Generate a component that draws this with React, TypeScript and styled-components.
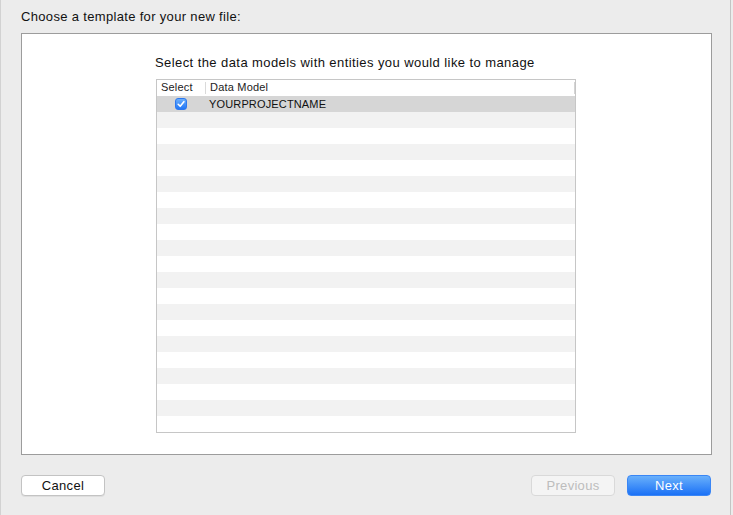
import styled, { createGlobalStyle } from "styled-components";

const GlobalStyle = createGlobalStyle`
    html, body {
        margin: 0;
        padding: 0;
        background: #ececec;
    }
    body {
        font-family: "Liberation Sans", Arial, sans-serif;
        color: #1a1a1a;
    }
`;

const StyledWindow = styled.div`
    width: 731px;
    height: 515px;
    box-sizing: border-box;
    border-left: 1px solid #d2d2d2;
    border-right: 1px solid #c4c4c4;
    padding: 0 19px 0 20px;
    display: flex;
    flex-direction: column;
    background: #ececec;
`;

const StyledTitle = styled.div`
    margin: 9px 0 8px 0;
    line-height: 16px;
    font-size: 13px;
    letter-spacing: 0.33px;
    color: #111;
`;

const StyledPanel = styled.div`
    width: 691px;
    height: 422px;
    box-sizing: border-box;
    border: 1px solid #9c9c9c;
    background: #fff;
    display: flex;
    flex-direction: column;
    align-items: flex-start;
    padding-left: 134px;
`;

const StyledColumn = styled.div`
    width: 420px;
    display: flex;
    flex-direction: column;
    margin-top: 21px;
`;

const StyledHeading = styled.div`
    line-height: 16px;
    font-size: 13px;
    letter-spacing: 0.42px;
    color: #111;
    margin: 0 0 8px -1px;
    white-space: nowrap;
`;

const StyledTable = styled.div`
    border: 1px solid #c6c6c6;
    display: flex;
    flex-direction: column;
`;

const StyledHeader = styled.div`
    display: grid;
    grid-template-columns: 48px 1fr 2px;
    height: 16px;
    align-items: center;
    font-size: 11px;
    color: #222;
`;

const StyledHeadCell = styled.div<{ $divider?: boolean }>`
    height: 12px;
    line-height: 11px;
    padding-left: 4px;
    letter-spacing: 0.2px;
    border-left: ${(p) => (p.$divider ? "1px solid #dadada" : "none")};
`;

const StyledEndMark = styled.div`
    height: 12px;
    background: #d4d4d4;
    width: 1px;
    justify-self: end;
`;

const StyledRow = styled.div<{ $shade: string }>`
    display: grid;
    grid-template-columns: 48px 1fr;
    height: 16px;
    align-items: center;
    background: ${(p) => p.$shade};
    font-size: 11px;
`;

const StyledCheckCell = styled.div`
    display: flex;
    padding-left: 18px;
`;

const StyledCheckbox = styled.div`
    width: 12px;
    height: 12px;
    border-radius: 3px;
    box-sizing: border-box;
    border: 1px solid #2d78ef;
    background: linear-gradient(#6aaefb, #2277f6);
    display: flex;
    align-items: center;
    justify-content: center;
`;

const StyledName = styled.div`
    padding-left: 4px;
    letter-spacing: 0.15px;
    color: #111;
`;

const StyledFooter = styled.div`
    display: flex;
    align-items: center;
    margin-top: 20px;
    gap: 12px;
`;

const StyledButton = styled.button<{ $kind?: "default" | "primary" | "disabled" }>`
    width: 84px;
    height: 21px;
    box-sizing: border-box;
    border-radius: 4px;
    font-family: "Liberation Sans", Arial, sans-serif;
    font-size: 13px;
    letter-spacing: 0.3px;
    padding: 0;
    line-height: 19px;
    border: 1px solid
        ${(p) => (p.$kind === "primary" ? "#3a86f5" : p.$kind === "disabled" ? "#d9d9d9" : "#c3c3c3")};
    background: ${(p) =>
        p.$kind === "primary"
            ? "linear-gradient(#69b0fb, #1b71f6)"
            : p.$kind === "disabled"
            ? "#f4f4f4"
            : "#fff"};
    color: ${(p) => (p.$kind === "primary" ? "#fff" : p.$kind === "disabled" ? "#bdbdbd" : "#111")};
    box-shadow: ${(p) => (p.$kind === "default" || !p.$kind ? "0 1px 0 rgba(0,0,0,0.06)" : "none")};
`;

const StyledSpacer = styled.div`
    flex: 1;
`;

const rows = Array.from({ length: 21 }, (_, i) => i);

export default function App() {
    return (
        <>
            <GlobalStyle />
            <StyledWindow>
                <StyledTitle>Choose a template for your new file:</StyledTitle>
                <StyledPanel>
                    <StyledColumn>
                        <StyledHeading>Select the data models with entities you would like to manage</StyledHeading>
                        <StyledTable>
                            <StyledHeader>
                                <StyledHeadCell>Select</StyledHeadCell>
                                <StyledHeadCell $divider>Data Model</StyledHeadCell>
                                <StyledEndMark />
                            </StyledHeader>
                            {rows.map((i) => (
                                <StyledRow key={i} $shade={i === 0 ? "#d6d6d6" : i % 2 ? "#f2f2f2" : "#fff"}>
                                    {i === 0 && (
                                        <>
                                            <StyledCheckCell>
                                                <StyledCheckbox>
                                                    <svg width="10" height="10" viewBox="0 0 10 10">
                                                        <path d="M2.2 5.3 L4.2 7.3 L7.9 2.7" fill="none" stroke="#fff" strokeWidth="1.6" strokeLinecap="round" strokeLinejoin="round" />
                                                    </svg>
                                                </StyledCheckbox>
                                            </StyledCheckCell>
                                            <StyledName>YOURPROJECTNAME</StyledName>
                                        </>
                                    )}
                                </StyledRow>
                            ))}
                        </StyledTable>
                    </StyledColumn>
                </StyledPanel>
                <StyledFooter>
                    <StyledButton>Cancel</StyledButton>
                    <StyledSpacer />
                    <StyledButton $kind="disabled">Previous</StyledButton>
                    <StyledButton $kind="primary">Next</StyledButton>
                </StyledFooter>
            </StyledWindow>
        </>
    );
}
